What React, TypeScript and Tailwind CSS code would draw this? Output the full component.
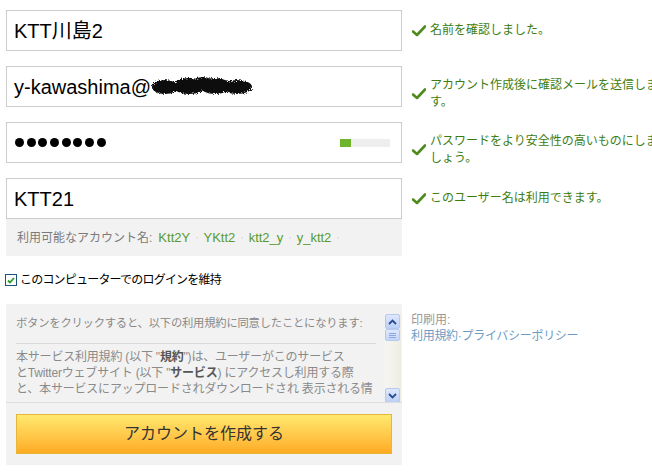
import React from "react";

const FONT = { fontFamily: '"Liberation Sans", Arial, "Noto Sans CJK JP", sans-serif' };

function Check() {
  return (
    <svg width="14" height="12" viewBox="0 0 14 12" className="shrink-0">
      <path d="M1 6.5 L5 10 L13 1.5" fill="none" stroke="#4f8a1e" strokeWidth="2.6" strokeLinejoin="round" strokeLinecap="round" />
    </svg>
  );
}

function Msg({ children, shift }: { children: React.ReactNode; shift?: boolean }) {
  return (
    <div className={"flex items-center pl-[10px] w-[260px] " + (shift ? "mt-[14px]" : "")}>
      <Check />
      <div className="ml-[4px] text-[12px] leading-[17px] text-[#3d7d10] whitespace-nowrap">{children}</div>
    </div>
  );
}

function Blob() {
  return (
    <svg width="104" height="22" viewBox="0 0 104 22" className="inline-block align-middle -mt-[2px]">
      <defs>
        <filter id="bl" x="-10%" y="-30%" width="120%" height="160%">
          <feTurbulence type="fractalNoise" baseFrequency="0.9" numOctaves="2" result="n" />
          <feDisplacementMap in="SourceGraphic" in2="n" scale="5" />
        </filter>
      </defs>
      <g filter="url(#bl)" fill="#111">
        <ellipse cx="14" cy="12" rx="13" ry="7" />
        <ellipse cx="38" cy="11" rx="16" ry="8" />
        <ellipse cx="64" cy="11" rx="15" ry="8" />
        <ellipse cx="86" cy="12" rx="15" ry="7" />
        <ellipse cx="52" cy="8" rx="10" ry="6" />
      </g>
    </svg>
  );
}

function ScrollBtn({ up }: { up: boolean }) {
  return (
    <div className="w-[15px] h-[15px] rounded-[2px] border border-[#b7c9ef] bg-gradient-to-b from-[#dfe8fc] to-[#bcd0f6] flex items-center justify-center">
      <svg width="9" height="6" viewBox="0 0 9 6">
        <path d={up ? "M1 5 L4.5 1.5 L8 5" : "M1 1 L4.5 4.5 L8 1"} fill="none" stroke="#2b4c95" strokeWidth="1.8" />
      </svg>
    </div>
  );
}

export default function App() {
  return (
    <div className="w-[652px] h-[475px] overflow-hidden bg-white" style={FONT}>
      <div className="w-[800px] pl-[6px] pt-[10px] flex flex-col">
        {/* Row 1 */}
        <div className="flex items-center h-[41px]">
          <div className="w-[396px] h-[41px] border border-[#cccccc] flex items-center pl-[7px] text-[20px] text-black">
            KTT川島2
          </div>
          <Msg>名前を確認しました。</Msg>
        </div>
        {/* Row 2 */}
        <div className="flex items-center h-[41px] mt-[15px]">
          <div className="w-[396px] h-[41px] shrink-0 border border-[#cccccc] flex items-center pl-[7px] text-[20px] text-black whitespace-nowrap">
            y-kawashima@<Blob />
          </div>
          <Msg shift>
            アカウント作成後に確認メールを送信しま
            <br />
            す。
          </Msg>
        </div>
        {/* Row 3 */}
        <div className="flex items-center h-[41px] mt-[15px]">
          <div className="w-[396px] h-[41px] shrink-0 border border-[#cccccc] flex items-center pl-[8px] pr-[11px]">
            <div className="flex gap-[2.7px]">
              {[0, 1, 2, 3, 4, 5, 6, 7].map((i) => (
                <span key={i} className="w-[9px] h-[9px] rounded-full bg-black inline-block" />
              ))}
            </div>
            <div className="ml-auto w-[50px] h-[8px] bg-[#eeeeee] flex">
              <div className="w-[11px] h-full bg-[#6cb52d]" />
            </div>
          </div>
          <Msg shift>
            パスワードをより安全性の高いものにしま
            <br />
            しょう。
          </Msg>
        </div>
        {/* Row 4 */}
        <div className="flex items-start mt-[15px]">
          <div className="w-[396px] shrink-0 flex flex-col">
            <div className="h-[41px] border border-[#cccccc] flex items-center pl-[7px] text-[20px] text-black">
              KTT21
            </div>
            <div className="h-[37px] bg-[#f2f2f2] flex items-center pl-[11px] text-[12px] whitespace-nowrap">
              <span className="text-[#7a7a7a]">利用可能なアカウント名:</span>
              <span className="ml-[6px] text-[13px] text-[#5a9a2c]">Ktt2Y</span>
              <span className="mx-[5px] text-[#cccccc] text-[10px]">·</span>
              <span className="text-[13px] text-[#5a9a2c]">YKtt2</span>
              <span className="mx-[5px] text-[#cccccc] text-[10px]">·</span>
              <span className="text-[13px] text-[#5a9a2c]">ktt2_y</span>
              <span className="mx-[5px] text-[#cccccc] text-[10px]">·</span>
              <span className="text-[13px] text-[#5a9a2c]">y_ktt2</span>
              <span className="ml-[5px] text-[#cccccc] text-[10px]">·</span>
            </div>
          </div>
          <div className="h-[41px] flex items-center">
            <Msg>このユーザー名は利用できます。</Msg>
          </div>
        </div>
        {/* Checkbox */}
        <div className="flex items-center mt-[18px] ml-[-1px] h-[12px]">
          <div className="w-[12px] h-[12px] border border-[#1c5180] bg-white flex items-center justify-center">
            <svg width="8" height="7" viewBox="0 0 8 7">
              <path d="M1 3.5 L3 5.5 L7 1" fill="none" stroke="#21a121" strokeWidth="1.8" />
            </svg>
          </div>
          <span className="ml-[3px] text-[12px] text-black tracking-[-0.8px]">このコンピューターでのログインを維持</span>
        </div>
        {/* Terms */}
        <div className="flex items-start mt-[18px]">
          <div className="w-[396px] shrink-0 bg-[#f2f2f2] flex flex-col">
            <div className="h-[99px] flex pt-[10px] pl-[10px] pr-[1px] border-b border-[#dddddd] overflow-hidden">
              <div className="w-[360px] flex flex-col">
                <div className="text-[11.3px] text-[#888888] whitespace-nowrap pt-[1px] pb-[11px] border-b border-[#d9d9d9] tracking-[-0.2px]">
                  ボタンをクリックすると、以下の利用規約に同意したことになります:
                </div>
                <div className="text-[12px] leading-[16px] text-[#8a8a8a] pt-[5px] whitespace-nowrap tracking-[-0.2px]">
                  本サービス利用規約 (以下 "<b className="text-[#555555]">規約</b>")は、ユーザーがこのサービス
                  <br />
                  とTwitterウェブサイト (以下 "<b className="text-[#555555]">サービス</b>) にアクセスし利用する際
                  <br />
                  と、本サービスにアップロードされダウンロードされ 表示される情
                </div>
              </div>
              <div className="ml-auto w-[16px] h-[89px] shrink-0 bg-gradient-to-r from-[#f6f5ef] to-[#eeede5] flex flex-col">
                <ScrollBtn up />
                <div className="w-[15px] h-[12px] rounded-[2px] border border-[#b7c9ef] bg-gradient-to-b from-[#dfe8fc] to-[#c4d6f8] flex flex-col items-center justify-center gap-[1px]">
                  <span className="w-[7px] h-[1px] bg-[#8da6dd]" />
                  <span className="w-[7px] h-[1px] bg-[#8da6dd]" />
                  <span className="w-[7px] h-[1px] bg-[#8da6dd]" />
                </div>
                <div className="flex-1" />
                <ScrollBtn up={false} />
              </div>
            </div>
            <div className="h-[62px] pt-[11px] px-[10px]">
              <div className="w-[376px] h-[40px] border border-[#e6b53a] bg-gradient-to-b from-[#ffe96d] to-[#ffab20] flex items-center justify-center text-[16px] text-[#333333]">
                アカウントを作成する
              </div>
            </div>
          </div>
          <div className="pl-[9px] pt-[8px] text-[12px] leading-[16px]">
            <div className="text-[#999999]">印刷用:</div>
            <div className="text-[#6b9cc3] tracking-[-0.3px]">利用規約·プライバシーポリシー</div>
          </div>
        </div>
      </div>
    </div>
  );
}
